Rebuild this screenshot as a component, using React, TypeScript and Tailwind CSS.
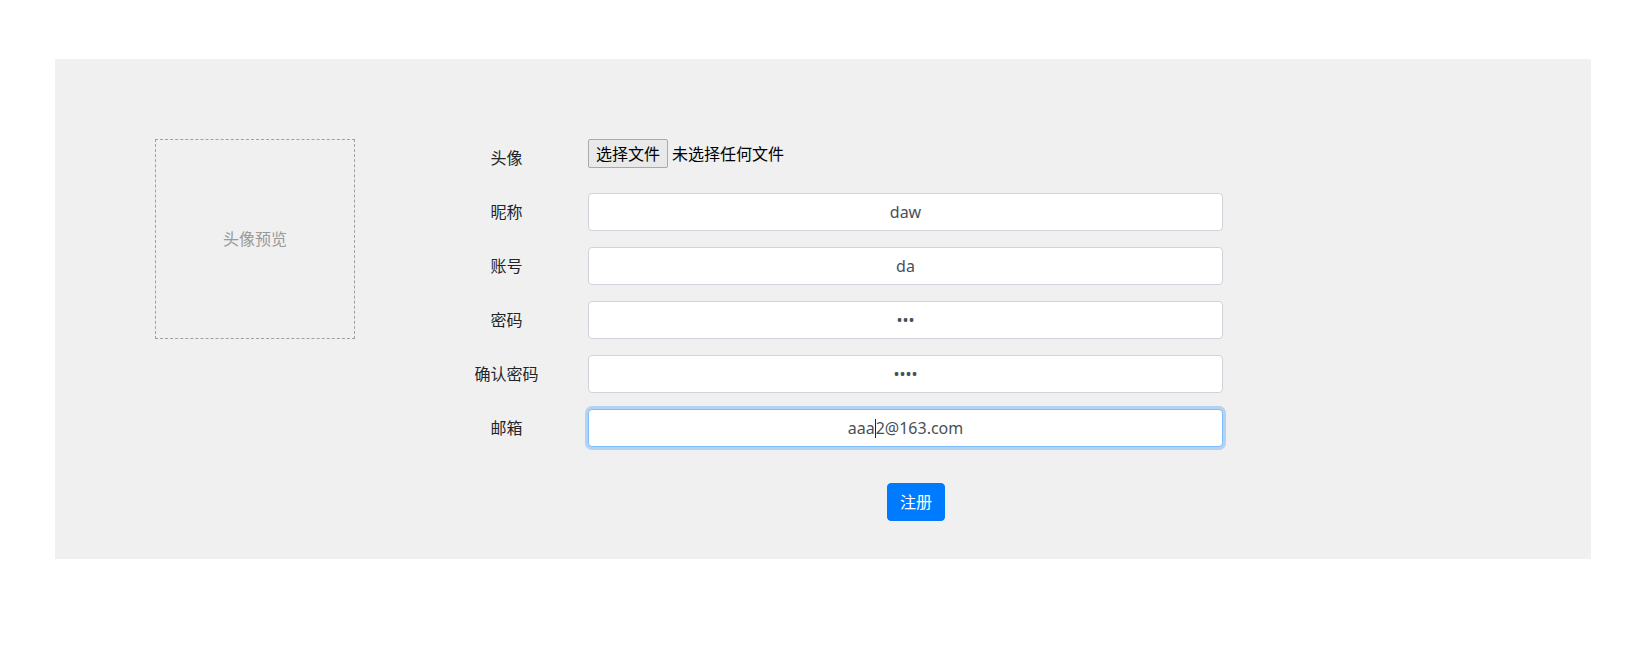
const fields = [
  { label: "昵称", value: "daw", type: "text" },
  { label: "账号", value: "da", type: "text" },
  { label: "密码", value: "123", type: "password" },
  { label: "确认密码", value: "1234", type: "password" },
];

const inputClass =
  "h-[38px] w-[635px] rounded-[4px] border border-[#ced4da] bg-white px-3 text-center text-base text-[#495057] outline-none";

export default function App() {
  return (
    <div className="min-h-screen bg-white pt-[59px] font-['Noto_Sans','Noto_Sans_CJK_SC',sans-serif] text-[#212529]">
      <div className="ml-[55px] flex h-[500px] w-[1536px] bg-[#f0f0f0] pt-[80px]">
        {/* 头像预览 */}
        <div className="ml-[100px] flex h-[200px] w-[200px] items-center justify-center border border-dashed border-[#a0a0a0] text-base text-[#999]">
          头像预览
        </div>

        <form className="ml-[88px] flex flex-col" onSubmit={(e) => e.preventDefault()}>
          <div className="mb-4 flex h-[38px] items-start">
            <label className="w-[127px] py-[7px] text-center leading-6">头像</label>
            <div className="ml-[18px] flex h-[29px] items-center gap-1">
              <button
                type="button"
                className="h-[29px] w-[80px] rounded-[2px] border border-[#a9a9a9] bg-[#e9e9e9] text-base leading-none text-black"
              >
                选择文件
              </button>
              <span className="text-base text-black">未选择任何文件</span>
            </div>
          </div>

          {fields.map((f) => (
            <div key={f.label} className="mb-4 flex items-center">
              <label className="w-[127px] py-[7px] text-center leading-6">{f.label}</label>
              <input
                type={f.type}
                defaultValue={f.value}
                readOnly
                className={`ml-[18px] ${inputClass}`}
              />
            </div>
          ))}

          <div className="mb-4 flex items-center">
            <label className="w-[127px] py-[7px] text-center leading-6">邮箱</label>
            <div className="ml-[18px] flex h-[38px] w-[635px] items-center justify-center rounded-[4px] border border-[#80bdff] bg-white px-3 text-base text-[#495057] shadow-[0_0_0_3px_rgba(0,123,255,0.25)]">
              <span>aaa</span>
              <span className="h-[19px] w-px bg-[#222]" />
              <span>2@163.com</span>
            </div>
          </div>

          <div className="mt-[20px] pl-[444px]">
            <button
              type="submit"
              className="h-[38px] w-[58px] rounded-[4px] border border-[#007bff] bg-[#007bff] text-base leading-6 text-white"
            >
              注册
            </button>
          </div>
        </form>
      </div>
    </div>
  );
}
